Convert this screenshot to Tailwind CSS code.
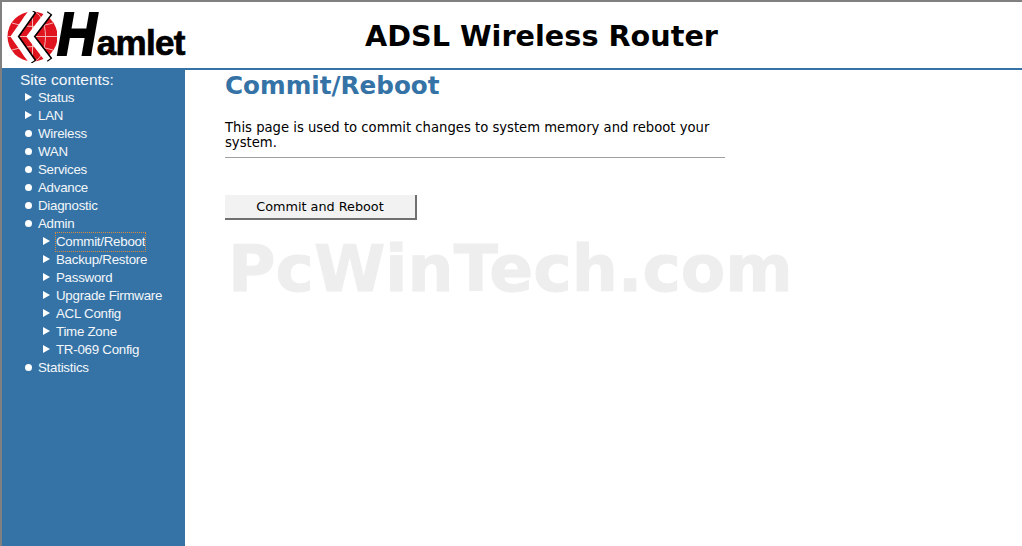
<!DOCTYPE html>
<html lang="en">
<head>
  <meta charset="UTF-8" />
  <title>ADSL Wireless Router</title>
  <script src="https://cdn.jsdelivr.net/npm/@tailwindcss/browser@4"></script>
</head>
<body class="bg-white overflow-hidden font-['DejaVu_Sans',sans-serif]">
  <div class="relative flex flex-col h-[546px] w-[1022px] border-t-2 border-l-2 border-[#808080]">

    <!-- Header -->
    <header class="flex h-[66px] border-b-2 border-[#3573a6] box-content -mb-px">
      <div class="w-[183px] flex items-start pl-[5px] pt-[9px] whitespace-nowrap">
        <svg width="50" height="52" viewBox="0 0 50 52" class="shrink-0">
          <circle cx="25.5" cy="25.5" r="25" fill="#e0141e"/>
          <g fill="none" stroke="#f7b5b5" stroke-width="1">
            <ellipse cx="25.5" cy="25.5" rx="13" ry="25"/>
            <path d="M1 25.5H50M5 12Q25 19 46 12M5 39Q25 32 46 39M25.5 1V50"/>
          </g>
          <g fill="none" stroke-width="6">
            <polyline points="27,0 9,25.5 27,51" stroke="#000"/>
            <polyline points="25,0 7,25.5 25,51" stroke="#fff"/>
            <polyline points="43,2 25,25.5 43,49" stroke="#000"/>
            <polyline points="41,2 23,25.5 41,49" stroke="#fff"/>
          </g>
        </svg>
        <span class="mt-[2px] scale-y-110 origin-bottom font-['Liberation_Sans',sans-serif] font-bold italic text-[55px] leading-[48px] text-black [-webkit-text-stroke:2px_black]">H</span>
        <span class="mt-[14px] font-['Liberation_Sans',sans-serif] font-bold text-[35px] leading-[36px] tracking-[-0.7px] text-black [-webkit-text-stroke:0.7px_black]">amlet</span>
      </div>
      <h1 class="ml-[180px] mt-[14px] font-bold text-[28.7px] leading-[40px] text-black whitespace-nowrap">ADSL Wireless Router</h1>
    </header>

    <div class="flex flex-1">
      <!-- Sidebar -->
      <aside class="w-[183px] bg-[#3573a6] text-[#f4f7fa] font-['Liberation_Sans',sans-serif] text-[13.3px] tracking-[-0.25px] leading-[18px] pt-[2px]">
        <p class="pl-[18px] text-[15.5px] tracking-normal leading-[18px]">Site contents:</p>
        <ul class="[&>li>span:first-child]:-translate-y-px">
          <li class="flex items-center h-[18px] pl-[23px] gap-[6px]"><span class="w-[7px] border-y-[4px] border-l-[7px] border-y-transparent border-l-white"></span>Status</li>
          <li class="flex items-center h-[18px] pl-[23px] gap-[6px]"><span class="w-[7px] border-y-[4px] border-l-[7px] border-y-transparent border-l-white"></span>LAN</li>
          <li class="flex items-center h-[18px] pl-[23px] gap-[6px]"><span class="w-[7px] h-[7px] rounded-full bg-white"></span>Wireless</li>
          <li class="flex items-center h-[18px] pl-[23px] gap-[6px]"><span class="w-[7px] h-[7px] rounded-full bg-white"></span>WAN</li>
          <li class="flex items-center h-[18px] pl-[23px] gap-[6px]"><span class="w-[7px] h-[7px] rounded-full bg-white"></span>Services</li>
          <li class="flex items-center h-[18px] pl-[23px] gap-[6px]"><span class="w-[7px] h-[7px] rounded-full bg-white"></span>Advance</li>
          <li class="flex items-center h-[18px] pl-[23px] gap-[6px]"><span class="w-[7px] h-[7px] rounded-full bg-white"></span>Diagnostic</li>
          <li class="flex items-center h-[18px] pl-[23px] gap-[6px]"><span class="w-[7px] h-[7px] rounded-full bg-white"></span>Admin</li>
          <li class="flex items-center h-[18px] pl-[41px] gap-[6px]"><span class="w-[7px] border-y-[4px] border-l-[7px] border-y-transparent border-l-white"></span><span class="outline-1 outline-dotted outline-[#d98a3a]">Commit/Reboot</span></li>
          <li class="flex items-center h-[18px] pl-[41px] gap-[6px]"><span class="w-[7px] border-y-[4px] border-l-[7px] border-y-transparent border-l-white"></span>Backup/Restore</li>
          <li class="flex items-center h-[18px] pl-[41px] gap-[6px]"><span class="w-[7px] border-y-[4px] border-l-[7px] border-y-transparent border-l-white"></span>Password</li>
          <li class="flex items-center h-[18px] pl-[41px] gap-[6px]"><span class="w-[7px] border-y-[4px] border-l-[7px] border-y-transparent border-l-white"></span>Upgrade Firmware</li>
          <li class="flex items-center h-[18px] pl-[41px] gap-[6px]"><span class="w-[7px] border-y-[4px] border-l-[7px] border-y-transparent border-l-white"></span>ACL Config</li>
          <li class="flex items-center h-[18px] pl-[41px] gap-[6px]"><span class="w-[7px] border-y-[4px] border-l-[7px] border-y-transparent border-l-white"></span>Time Zone</li>
          <li class="flex items-center h-[18px] pl-[41px] gap-[6px]"><span class="w-[7px] border-y-[4px] border-l-[7px] border-y-transparent border-l-white"></span>TR-069 Config</li>
          <li class="flex items-center h-[18px] pl-[23px] gap-[6px]"><span class="w-[7px] h-[7px] rounded-full bg-white"></span>Statistics</li>
        </ul>
      </aside>

      <!-- Main -->
      <main class="pl-[40px] w-[540px]">
        <h2 class="font-bold text-[24.65px] leading-[30px] text-[#3573a6] mt-[2px]">Commit/Reboot</h2>
        <p class="mt-[19px] text-[13.2px] leading-[15px] text-black">This page is used to commit changes to system memory and reboot your system.</p>
        <hr class="mt-[7px] border-t border-[#a0a0a0]" />
        <button class="mt-[37px] w-[192px] h-[25px] bg-[#f2f2f2] border-r-2 border-b-2 border-[#707070] text-[12.8px] text-black">Commit and Reboot</button>
      </main>
    </div>

    <!-- Watermark -->
    <div class="absolute left-[226px] top-[227px] font-bold text-[64.8px] leading-[80px] text-[#eeeeee] whitespace-nowrap [-webkit-text-stroke:1px_#eeeeee]">PcWinTech.com</div>
  </div>
</body>
</html>
